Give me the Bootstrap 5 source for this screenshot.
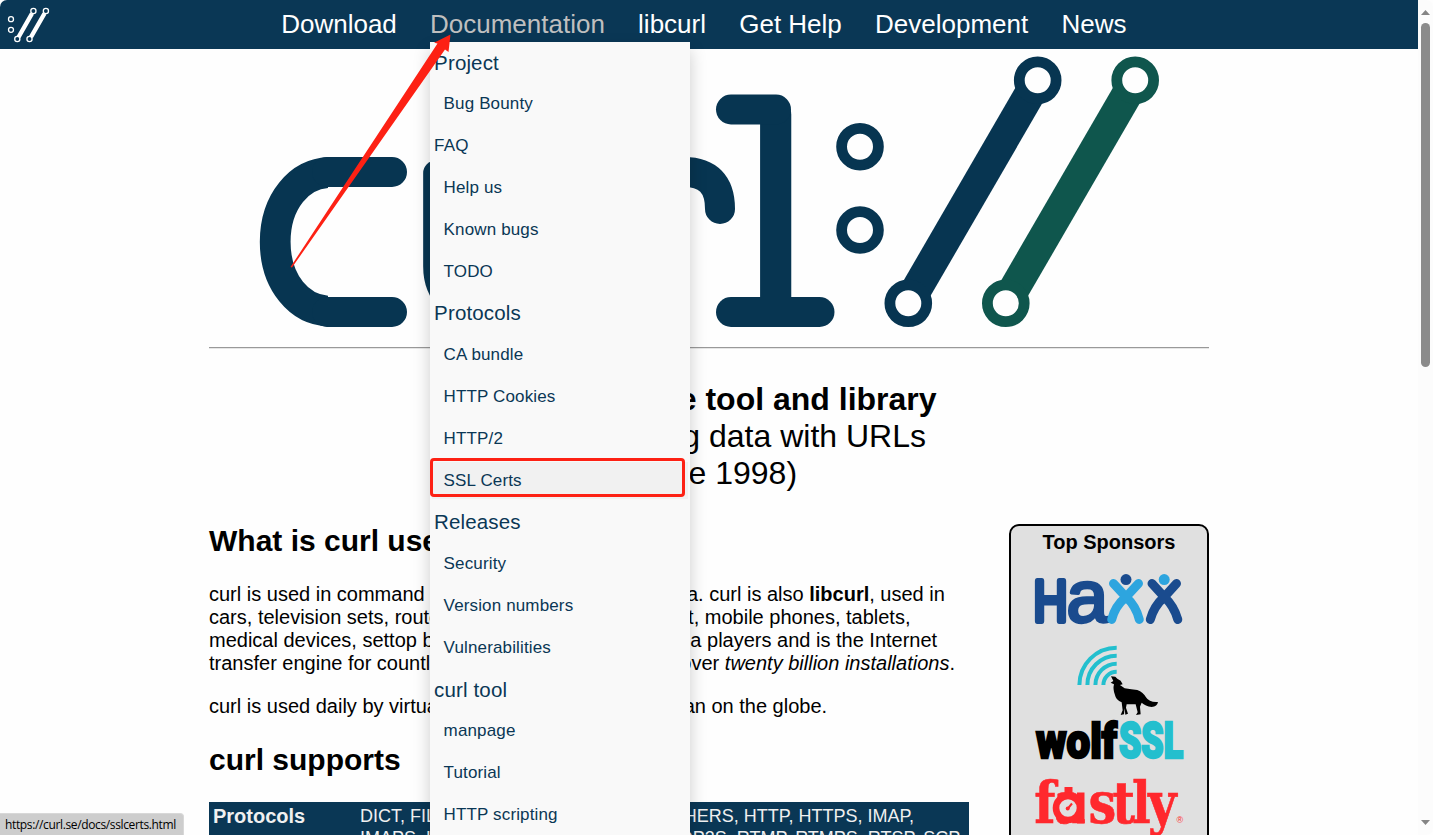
<!DOCTYPE html>
<html lang="en">
<head>
<meta charset="utf-8">
<title>curl</title>
<link href="https://cdn.jsdelivr.net/npm/bootstrap@5.3.0/dist/css/bootstrap.min.css" rel="stylesheet">
<style>
html,body{height:100%;overflow:hidden}
body{font-family:"Liberation Sans",Arial,sans-serif;font-size:20px;line-height:23px;color:#000;background:#fefefe}
.viewport{height:835px}
.topbar{height:49px;background:#0a3755;border-top-left-radius:7px}
.topbar .brand{width:281.2px}
.mainmenu{gap:33.2px;font-size:26px;line-height:48px}
.mainmenu a{color:#fff;text-decoration:none}
.mainmenu a.current{color:#bfbfbf}
.docmenu{top:42px;left:.1px;width:260px;background:#f9f9f9;box-shadow:0 8px 16px rgba(0,0,0,.2);z-index:5;font-size:17px;letter-spacing:.14px}
.docmenu a{display:block;height:41.8px;line-height:41.8px;padding-left:13.5px;color:#0a3755;white-space:nowrap;position:relative;top:-.35px}
.docmenu a.top{padding-left:4px}
.docmenu a.group{padding-left:4px;font-size:20.5px}
.docmenu a.hovered{background:#f1f1f1;box-shadow:inset 0 0 0 2px #f9f9f9}
.ring{left:0;top:416px;width:255px;height:39px;border:3px solid #fd2114;border-radius:4px}
.pointer{left:0;top:0;z-index:6;pointer-events:none}
.page{width:1000px;margin-left:209px}
.biglogo{display:block;height:298px}
.rule{height:2px;border-top:1px solid #999;border-bottom:1px solid #e6e6e6}
.tagline{font-size:32px;line-height:37px;margin-top:32px}
.story{width:760px}
h2{font-size:30px;line-height:34px;font-weight:700;margin:0}
.story p{margin:0;white-space:nowrap}
.protos{background:#0a3755;color:#f0f0f0;padding:3px 4px;height:80px;white-space:nowrap}
.protos .names{width:147px;flex:none}
.protos .values{font-size:18px;line-height:22px}
.sponsors{width:200px;height:400px;background:#e0e0e0;border:2px solid #000;border-radius:10px 10px 0 0}
.scroller{width:15px;background:#fcfcfc;border-radius:0 7px 7px 0}
.thumb{width:9px;height:344px;background:#8b8b8b;border-radius:5px;margin-top:7px}
.hint{left:0;bottom:0;width:184px;height:22px;background:#cdcdcd;border:1px solid #d8d8d8;border-left:0;border-bottom:0;border-top-right-radius:4px;font:12px/21px "Open Sans","Noto Sans",sans-serif;letter-spacing:-.36px;padding-left:5px;z-index:7}
</style>
</head>
<body>
<div class="viewport d-flex overflow-hidden position-relative">
  <div class="flex-grow-1 overflow-hidden">
    <nav class="topbar d-flex">
      <a class="brand flex-shrink-0" href="#" aria-label="home">
        <svg class="d-block" width="60" height="49" fill="none" stroke="#fff">
          <g stroke-width="4.4"><path d="M32 13.5 18.6 37M44.5 13.5 31 37"/></g>
          <g stroke-width="1.3" fill="#0a3755"><circle cx="11" cy="19.2" r="2.5"/><circle cx="11" cy="29.8" r="2.5"/><circle cx="33.4" cy="11" r="2.6"/><circle cx="17.3" cy="39" r="2.6"/><circle cx="45.9" cy="11" r="2.6"/><circle cx="29.5" cy="39" r="2.6"/></g>
        </svg>
      </a>
      <ul class="mainmenu list-unstyled d-flex mb-0 text-nowrap">
        <li><a href="#">Download</a></li>
        <li class="position-relative"><a class="current" href="#">Documentation</a>
          <div class="docmenu position-absolute">
            <a class="group" href="#">Project</a>
            <a href="#">Bug Bounty</a>
            <a class="top" href="#">FAQ</a>
            <a href="#">Help us</a>
            <a href="#">Known bugs</a>
            <a href="#">TODO</a>
            <a class="group" href="#">Protocols</a>
            <a href="#">CA bundle</a>
            <a href="#">HTTP Cookies</a>
            <a href="#">HTTP/2</a>
            <a class="hovered" href="#">SSL Certs</a>
            <a class="group" href="#">Releases</a>
            <a href="#">Security</a>
            <a href="#">Version numbers</a>
            <a href="#">Vulnerabilities</a>
            <a class="group" href="#">curl tool</a>
            <a href="#">manpage</a>
            <a href="#">Tutorial</a>
            <a href="#">HTTP scripting</a>
            <div class="ring position-absolute"></div>
          </div>
        </li>
        <li><a href="#">libcurl</a></li>
        <li><a href="#">Get Help</a></li>
        <li><a href="#">Development</a></li>
        <li><a href="#">News</a></li>
      </ul>
    </nav>

    <div class="page">
      <svg class="biglogo" width="1000" height="298" viewBox="209 49 1000 298">
        <clipPath id="bowl"><rect x="209" y="49" width="119" height="298"/></clipPath>
        <g font-family="Inter" font-weight="100" fill="#073551" stroke="#073551" stroke-width="25" stroke-linejoin="round">
          <text x="256" y="312" font-size="257" clip-path="url(#bowl)">c</text>
          <text x="411 590" y="312" font-size="255">ur<tspan font-size="275" x="746" y="314.5">l</tspan></text>
        </g>
        <g fill="none" stroke="#073551" stroke-width="30" stroke-linecap="round"><path d="M684 172Q720 172 720 209M327 172H392M327 312H392"/></g>
        <g fill="#073551"><rect x="716" y="94.5" width="75" height="30" rx="15"/><rect x="716" y="297" width="118.5" height="30" rx="15"/></g>
        <g fill="none" stroke="#073551" stroke-width="10.8"><circle cx="860" cy="146.7" r="18.4"/><circle cx="860" cy="230" r="18.4"/></g>
        <g stroke="#073551" fill="#fefefe"><path d="M1037.7 80.3 908.3 303.3" stroke-width="31"/><g stroke-width="10.8"><circle cx="1037.7" cy="80.3" r="18.4"/><circle cx="908.3" cy="303.3" r="18.4"/></g></g>
        <g stroke="#0f564d" fill="#fefefe"><path d="M1135.2 80.3 1005.8 303.3" stroke-width="31"/><g stroke-width="10.8"><circle cx="1135.2" cy="80.3" r="18.4"/><circle cx="1005.8" cy="303.3" r="18.4"/></g></g>
      </svg>
      <div class="rule"></div>
      <div class="tagline text-center"><b>command line tool and library</b><br>for transferring data with URLs<br>(since 1998)</div>
      <div class="d-flex justify-content-between" style="margin-top:32px">
        <div class="story">
          <h2>What is curl used for?</h2>
          <p style="margin-top:25px">curl is used in command lines or scripts to transfer data. curl is also <b>libcurl</b>, used in<br>cars, television sets, routers, printers, audio equipment, mobile phones, tablets,<br>medical devices, settop boxes, computer games, media players and is the Internet<br>transfer engine for countless software applications in over <i>twenty billion installations</i>.</p>
          <p style="margin:20px 0 25px">curl is used daily by virtually every Internet-using human on the globe.</p>
          <h2>curl supports</h2>
          <div class="protos d-flex" style="margin-top:25px"><b class="names">Protocols</b><span class="values">DICT, FILE, FTP, FTPS, GOPHER, GOPHERS, HTTP, HTTPS, IMAP,<br>IMAPS, LDAP, LDAPS, MQTT, POP3, POP3S, RTMP, RTMPS, RTSP, SCP,</span></div>
        </div>
        <aside class="sponsors d-flex flex-column align-items-center">
          <b class="text-nowrap" style="margin-top:5px">Top Sponsors</b>
          <svg class="flex-shrink-0" style="margin-top:20px" width="148" height="51" overflow="visible" font-family="Liberation Sans" fill="#1a4b8e" stroke="#1a4b8e" stroke-linejoin="round" stroke-linecap="round">
            <text x="-1.5" y="47" font-size="57" stroke-width="6" textLength="34" lengthAdjust="spacingAndGlyphs">H</text>
            <text x="31.5" y="48" font-size="75" stroke-width="3.4">a</text>
            <g fill="none" stroke-width="9" stroke="#2da5df"><path d="M78.5 9.5 91 23Q101 32 104.3 45.5M103.5 9.5 91 23Q80 32 76.7 45.5"/></g>
            <g fill="none" stroke-width="9"><path d="M117 9.5 129.3 23Q139 32 142.8 45.5M141.5 9.5 129.3 23Q119 32 115.3 45.5"/></g>
            <g stroke="none"><circle cx="91" cy="5.6" r="5.5"/><circle cx="129.2" cy="5.6" r="5.5" fill="#2da5df"/></g>
          </svg>
          <svg class="flex-shrink-0" style="margin-top:19px" width="148" height="116" overflow="visible" font-family="Roboto" font-weight="900">
            <path fill="none" stroke="#23bfce" stroke-width="4" d="M44.4 41A37.3 37.3 0 0 1 81.7 3.7M52.4 41A29.3 29.3 0 0 1 81.7 11.7M60.4 41A21.3 21.3 0 0 1 81.7 19.7M68.4 41A13.3 13.3 0 0 1 81.7 27.7"/>
            <path transform="translate(-35 -9) scale(.3333)" d="M333 124 346 125 352 131 362 137 368 148 360 150 374 160Q395 163 412 165 430 172 438 187 448 203 474 201 472 215 455 216 436 213 425 203L420 215 422 238 408 240 413 232 407 208 380 208 378 218 384 236 376 239 374 220 372 238 362 240 368 226 365 202Q348 196 345 180 338 163 342 148L332 143 340 138Z"/>
            <text x="1" y="113.5" font-size="48" textLength="81" lengthAdjust="spacingAndGlyphs" stroke="#000" stroke-width="2.4">wolf</text>
            <text x="84" y="113.5" font-size="50" fill="#23bfce" textLength="64" lengthAdjust="spacingAndGlyphs" stroke="#23bfce" stroke-width="2.6">SSL</text>
          </svg>
          <svg class="flex-shrink-0" style="margin-top:19px" width="148" height="60" overflow="visible" fill="#ff282d">
            <text transform="scale(.85 1)" x="-1 22 63 91 114 133" y="44.3" font-family="DejaVu Serif" font-weight="700" font-size="58" stroke="#ff282d" stroke-width=".6">fastly</text>
            <path d="M29.5 8h8v8h-8zM42 13.5h7.5v31H42z"/>
            <circle cx="33" cy="29" r="12" fill="#e0e0e0" stroke="#ff282d" stroke-width="6.6"/>
            <path d="M32.5 30 37 24.5" stroke="#ff282d" stroke-width="2"/><circle cx="32.7" cy="29.5" r="2"/>
            <text x="141.5" y="44" font-family="Liberation Sans" font-size="9">®</text>
          </svg>
        </aside>
      </div>
    </div>
  </div>
  <div class="scroller flex-shrink-0 d-flex flex-column align-items-center">
    <svg class="flex-shrink-0" width="15" height="16"><path d="M3 15 7.5 10 12 15z" fill="#858585"/></svg>
    <div class="thumb flex-shrink-0"></div>
    <svg class="mt-auto flex-shrink-0" width="15" height="16"><path d="M3 1 7.5 6 12 1z" fill="#858585"/></svg>
  </div>
  <svg class="pointer position-absolute" width="500" height="300"><path d="M450.5 34.5 434 42.7 437.5 43.5 290.5 267 292 267.5 445 49.5 448.5 52z" fill="#fd2114"/></svg>
  <div class="hint position-absolute text-nowrap">https://curl.se/docs/sslcerts.html</div>
</div>
<script src="https://cdn.jsdelivr.net/npm/bootstrap@5.3.0/dist/js/bootstrap.bundle.min.js"></script>
</body>
</html>
